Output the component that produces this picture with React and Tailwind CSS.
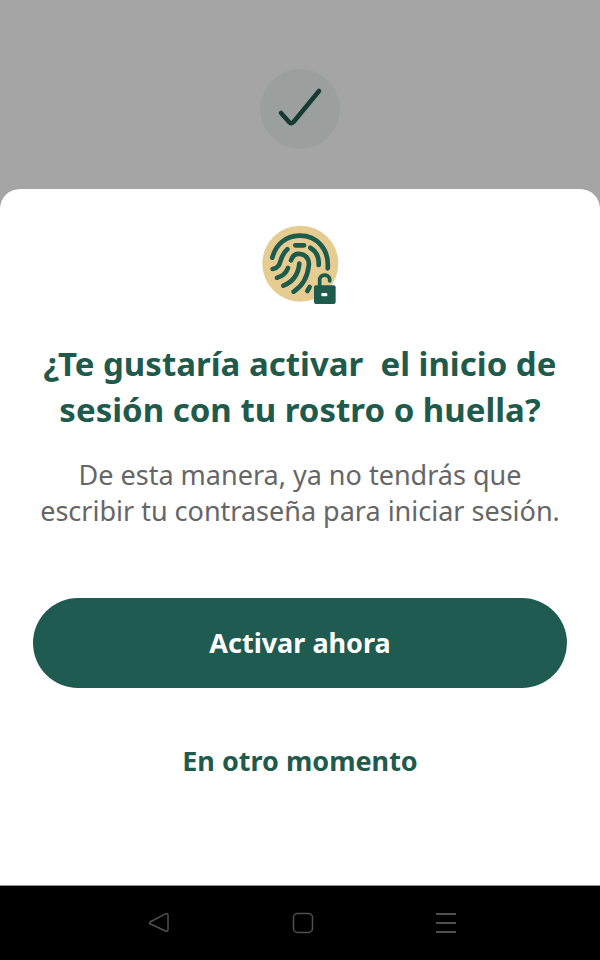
function FingerprintIcon() {
  return (
    <svg viewBox="0 0 240 240" className="w-20 h-20" fill="none" aria-hidden="true">
      <circle cx="121" cy="116" r="114" fill="#e6cc91" />
      <g stroke="#1d5b4c" strokeWidth="14" strokeLinecap="round" strokeLinejoin="round">
        <path d="M37 98C47 58 78 33 118 32C170 31 208 72 203 130" />
        <path d="M38 132C70 126 53 98 82 73" />
        <path d="M106 61H132" />
        <path d="M151 68C170 80 178 98 176 120" />
        <path d="M51 158C68 154 78 145 84 129" />
        <path d="M93 106C98 90 109 85 121 87C141 90 149 105 146 124C142 158 126 184 101 200" />
        <path d="M70 182C99 170 115 147 118 116" />
        <path d="M149 186L142 198" />
      </g>
      <path d="M179 182V161A16 16 0 0 1 209 161V168" stroke="#1d5b4c" strokeWidth="11" strokeLinecap="round" />
      <rect x="162" y="181" width="65" height="56" rx="6" fill="#1d5b4c" />
      <rect x="184" y="204" width="18" height="10" rx="3" fill="#fff" />
    </svg>
  );
}

function NavBar() {
  return (
    <nav className="flex items-center justify-between h-[75px] pl-[147px] pr-[142px] border-t border-[#8b9593] bg-black text-[#505050]">
      <button type="button" aria-label="Atrás">
        <svg viewBox="0 0 24 24" className="w-6 h-6" fill="none" stroke="currentColor" strokeWidth="1.5" strokeLinejoin="round">
          <path d="M3 11L18.500 2.800Q21 2 21 4V18.500Q21 21 18.500 20L3 12.800Q2 12 3 11Z" />
        </svg>
      </button>
      <button type="button" aria-label="Inicio">
        <svg viewBox="0 0 24 24" className="w-6 h-6" fill="none" stroke="currentColor" strokeWidth="1.5">
          <rect x="2.500" y="2.500" width="19" height="19" rx="4" />
        </svg>
      </button>
      <button type="button" aria-label="Recientes">
        <svg viewBox="0 0 24 24" className="w-6 h-6" fill="none" stroke="currentColor" strokeWidth="2">
          <path d="M2 3H22M2 12H22M2 21H22" />
        </svg>
      </button>
    </nav>
  );
}

export default function App() {
  return (
    <div className="flex flex-col min-h-screen bg-[#a5a5a5] font-['Noto_Sans',sans-serif]">
      {/* Dimmed screen behind the sheet */}
      <header className="flex justify-center pt-[69px] pb-10">
        <div className="flex items-center justify-center w-20 h-20 rounded-full bg-[#9ba09f]">
          <svg viewBox="0 0 48 48" className="w-12 h-12" fill="none" stroke="#153b33" strokeWidth="4.500" strokeLinecap="round" strokeLinejoin="round">
            <path d="M5 28L13.500 37.500Q15.500 39 17.500 37L43 6" />
          </svg>
        </div>
      </header>

      {/* Bottom sheet */}
      <main className="flex flex-col items-center flex-1 px-[33px] pt-9 rounded-t-[20px] bg-white text-center">
        <FingerprintIcon />
        <h1 className="mt-9 text-[33px] leading-[46px] font-bold text-[#1f5b4c]">
          ¿Te gustaría activar&nbsp; el inicio de sesión con tu rostro o huella?
        </h1>
        <p className="mt-6 text-[27px] leading-9 text-[#666]">
          De esta manera, ya no tendrás que escribir tu contraseña para iniciar sesión.
        </p>
        <button type="button" className="w-full h-[90px] mt-[69px] rounded-full bg-[#1f5b50] text-[27px] leading-9 font-bold text-white">
          Activar ahora
        </button>
        <button type="button" className="mt-[55px] text-[27px] leading-9 font-bold text-[#1f5b4c]">
          En otro momento
        </button>
      </main>

      <NavBar />
    </div>
  );
}
